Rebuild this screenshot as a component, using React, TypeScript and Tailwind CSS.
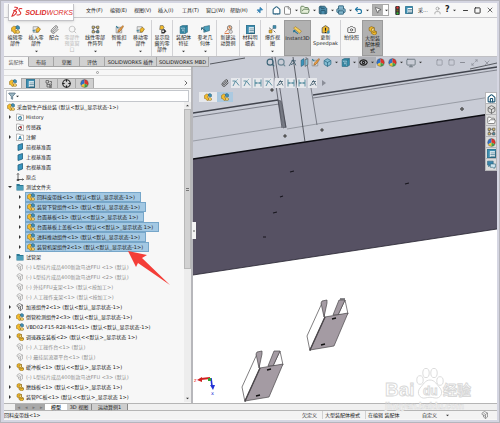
import type { ReactNode } from 'react';
import clsx from 'clsx';
import {
  Box, Camera, ChevronRight, Crosshair, Eye, File, FolderOpen, Funnel, House, Maximize2, Minus, Monitor,
  MousePointer2, Paperclip, Pin, Printer, Save, Search, Square, Undo2, User, X
} from 'lucide-react';

type GlyphName =
  | 'assembly' | 'part' | 'ghost' | 'plane' | 'folder' | 'history' | 'sensor' | 'note' | 'origin'
  | 'list' | 'tree' | 'ball' | 'pattern' | 'tools' | 'move' | 'show' | 'feature' | 'geometry'
  | 'motion' | 'explode' | 'ruler' | 'warning' | 'axes' | 'mate' | 'width' | 'chat' | 'section' | 'light';

const glyphs: Record<GlyphName, ReactNode> = {
  assembly: (
    <>
      <path d="M1 5l4-3 4 1 1 3-3 1 1 3 3 1-1 3-4 1-3-4-2 0z" fill="#f2bb2c" stroke="#8a661a" />
      <path d="M9 2l3-1 3 2v4l-3 1-3-2z" fill="#3f8fb2" stroke="#245c78" />
      <path d="M9 10l3-1 3 2v3l-3 1-3-1z" fill="#f6d268" stroke="#8a661a" />
    </>
  ),
  part: (
    <>
      <path d="M2 3l4-2 5 2v5l4 2v4l-4 2-5-3v-3l-4-2z" fill="#f2bb2c" stroke="#7c5a12" />
      <path d="M6 5l5-2v5l-4 2zM8 12l7-2" fill="#f9dd80" stroke="#7c5a12" />
    </>
  ),
  ghost: (
    <>
      <path d="M2 4l5-3 6 3v8l-4 3-4-3v-4l-3-1z" fill="#f2f2f2" stroke="currentColor" />
      <path d="M5 4l4 3 4-3M9 7v8M5 8l4 3" fill="none" stroke="currentColor" />
    </>
  ),
  plane: <path d="M4 4l9-3v11l-9 3z" fill="#3a95be" stroke="#1f607f" strokeWidth="1.6" />,
  folder: (
    <>
      <path d="M1 2h6l1 2h7v11H1z" fill="#2b7894" />
      <path d="M2 6h12v8H2z" fill="#4ca0bb" />
    </>
  ),
  history: (
    <>
      <path d="M1 2h6l1 2h7v11H1z" fill="#fff" stroke="#777" />
      <circle cx="8" cy="10" r="3.4" fill="#d7eef7" stroke="#26708f" strokeWidth="1.5" />
      <path d="M8 8v2l2 1" fill="none" stroke="#26708f" />
    </>
  ),
  sensor: (
    <>
      <path d="M1 2h6l1 2h7v11H1z" fill="#fff" stroke="#777" />
      <circle cx="8" cy="10" r="3.4" fill="none" stroke="#444" strokeWidth="1.5" />
      <path d="M8 10l3-3" stroke="#e03030" strokeWidth="2.2" />
    </>
  ),
  note: (
    <>
      <path d="M1 2h6l1 2h7v11H1z" fill="#fff" stroke="#777" />
      <path d="M5 13l3-7 3 7M6 11h4" fill="none" stroke="#1f7399" strokeWidth="1.7" />
    </>
  ),
  origin: <path d="M4 1v12h11M2 3l2-2 2 2M13 11l2 2-2 2M2 13h4v2H2z" fill="none" stroke="#333" strokeWidth="1.5" />,
  list: (
    <>
      <path d="M1 1h14v14H1z" fill="#fff" stroke="#28657f" strokeWidth="1.8" />
      <path d="M1 1h14v3H1zM1 4h4v11H1z" fill="#3f8fb2" />
      <path d="M6 7h8M6 10h8M6 13h8" stroke="#28657f" strokeWidth="1.3" />
    </>
  ),
  tree: <path d="M2 1h5v5H2zM9 3h4v4M4 6v8h5M4 9h5M9 8h4v3H9zM9 13h4v2H9z" fill="none" stroke="#555" strokeWidth="1.5" />,
  ball: (
    <>
      <path d="M8 8V1a7 7 0 0 0-6 10z" fill="#3171c7" />
      <path d="M8 8V1a7 7 0 0 1 6 10z" fill="#df352b" />
      <path d="M8 8l-6 3a7 7 0 0 0 6 4z" fill="#f3c531" />
      <path d="M8 8l6 3a7 7 0 0 1-6 4z" fill="#45a545" />
      <circle cx="8" cy="8" r="7" fill="none" stroke="#333" strokeOpacity=".6" />
    </>
  ),
  pattern: (
    <>
      <path d="M2 2h4v4H2zM10 2h4v4h-4zM2 10h4v4H2z" fill="#f6d268" stroke="#555" strokeWidth="1.3" />
      <path d="M10 10h4v4h-4zM6 4h4M4 6v4M12 6v4M6 12h4" fill="#4ca0bb" stroke="#555" strokeWidth="1.3" />
    </>
  ),
  tools: (
    <>
      <path d="M2 4h10v10H2z" fill="#d9dde0" stroke="#777" />
      <path d="M14 1L6 9l-1 4 4-2 6-8z" fill="#f2a444" stroke="#854f19" />
      <path d="M2 2l4 4" stroke="#2b7894" strokeWidth="2" />
    </>
  ),
  move: (
    <>
      <path d="M2 3h9v10H2z" fill="#e8e8e8" stroke="#777" />
      <path d="M7 8l4-4 4 3-3 5-4 1z" fill="#f2bb2c" stroke="#7c5a12" />
      <path d="M2 10h4M4 8l-2 2 2 2" fill="none" stroke="#2b7894" strokeWidth="1.4" />
    </>
  ),
  show: (
    <>
      <path d="M4 1h5l2 4-3 3H3z" fill="#f2bb2c" stroke="#555" />
      <path d="M6 9l5-2 4 4-4 4H6z" fill="#333" />
      <circle cx="9" cy="11" r="1.6" fill="#fff" />
    </>
  ),
  feature: (
    <>
      <path d="M2 3l4-2h9v12l-4 2H2z" fill="#328fae" stroke="#255d74" />
      <path d="M2 4h9v11M11 4l4-3M5 7h4v5H5z" fill="#9bd2e5" stroke="#255d74" />
    </>
  ),
  geometry: (
    <>
      <path d="M5 3l10-2v9L5 13z" fill="#4ca0bb" stroke="#255d74" />
      <path d="M1 5l8 6M1 5v4M1 5h4" fill="none" stroke="#255d74" strokeWidth="1.6" />
    </>
  ),
  motion: (
    <>
      <circle cx="10" cy="5" r="4" fill="#f3d9bd" stroke="#666" strokeWidth="1.4" />
      <path d="M2 13l6-6M1 15h8M10 2v3l2 1" fill="none" stroke="#d56a34" strokeWidth="1.7" />
      <circle cx="12" cy="12" r="3" fill="#ddd" stroke="#777" />
    </>
  ),
  explode: (
    <>
      <path d="M9 1h5v5H9z" fill="#3f8fb2" stroke="#245c78" />
      <path d="M2 9h5v5H2z" fill="#f2bb2c" stroke="#7c5a12" />
      <path d="M6 9l3-3M10 10l3 3M2 5l3 2" stroke="#555" strokeWidth="1.5" />
    </>
  ),
  ruler: (
    <>
      <path d="M1 4l3-3 11 8-3 4z" fill="#f5cf5a" stroke="#9a742c" />
      <path d="M1 8l8 6M1 8v3M1 8h3" fill="none" stroke="#2b7894" strokeWidth="1.8" />
    </>
  ),
  warning: (
    <>
      <path d="M2 5l6-4 6 4v9H2z" fill="#f2bb2c" stroke="#555" strokeWidth="1.4" />
      <path d="M8 5v5M8 12v2" stroke="#222" strokeWidth="2" />
      <path d="M11 10h4v5h-4z" fill="#3f8fb2" />
    </>
  ),
  axes: <path d="M1 4h6l7 9M7 4l-5 10M9 3l2-2" fill="none" stroke="#39788f" strokeWidth="1.6" />,
  mate: <path d="M2 14L9 3l5 10M6 5h8M11 9l-6 3" fill="none" stroke="#435d6d" strokeWidth="1.6" />,
  width: <path d="M2 1v14M14 1v14M3 8h10M5 6L3 8l2 2M11 6l2 2-2 2" fill="none" stroke="#39788f" strokeWidth="1.6" />,
  chat: (
    <>
      <path d="M1 2h10v7H6l-3 3V9H1z" fill="#3a86ae" stroke="#255d74" />
      <path d="M6 7h9v6h-2v2l-3-2H6z" fill="#cfe6f0" stroke="#255d74" />
    </>
  ),
  section: (
    <>
      <path d="M2 4l5-3v11l-5 3z" fill="#3a95be" stroke="#255d74" />
      <path d="M9 3l5-2v11l-5 3z" fill="#8cbfd3" stroke="#444" />
    </>
  ),
  light: (
    <>
      <rect x="4" y="0" width="8" height="16" rx="2" fill="#333" />
      <circle cx="8" cy="3" r="2" fill="#e33" />
      <circle cx="8" cy="8" r="2" fill="#776020" />
      <circle cx="8" cy="13" r="2" fill="#3b3" />
    </>
  )
};

function Glyph({ name, className = 'size-2' }: { name: GlyphName; className?: string }) {
  return (
    <svg viewBox="0 0 16 16" className={clsx('shrink-0', className)} aria-hidden="true">
      {glyphs[name]}
    </svg>
  );
}

function Caret() {
  return (
    <svg viewBox="0 0 4 4" className="size-[3px] shrink-0" aria-hidden="true">
      <path d="M0 1h4L2 3z" fill="#333" />
    </svg>
  );
}

const menus = ['文件(F)', '编辑(E)', '视图(V)', '插入(I)', '工具(T)', '窗口(W)', '帮助(H)'];

interface Command {
  lines: string[];
  icon: ReactNode;
  width: string;
  divider?: boolean;
  active?: boolean;
  disabled?: boolean;
  menu?: boolean;
}

const commands: Command[] = [
  { lines: ['编辑零', '部件'], icon: <Glyph name="assembly" className="size-[9px]" />, width: 'w-[22px]' },
  { lines: ['插入零', '部件'], icon: <Glyph name="move" className="size-[9px]" />, width: 'w-[20px]', menu: true },
  { lines: ['配合'], icon: <Paperclip className="size-[9px] text-[#555]" />, width: 'w-[16px]' },
  { lines: ['零部件', '预览窗', '口'], icon: <Search className="size-[9px]" />, width: 'w-[20px]', disabled: true },
  { lines: ['线性零部', '件阵列'], icon: <Glyph name="pattern" className="size-[9px]" />, width: 'w-[26px]', menu: true },
  { lines: ['智能扣', '件'], icon: <Glyph name="tools" className="size-[9px]" />, width: 'w-[22px]' },
  { lines: ['移动零', '部件'], icon: <Glyph name="move" className="size-[9px]" />, width: 'w-[21px]', menu: true },
  { lines: ['显示隐', '藏的零', '部件'], icon: <Glyph name="show" className="size-[9px]" />, width: 'w-[21px]', divider: true },
  { lines: ['装配体', '特征'], icon: <Glyph name="feature" className="size-[9px]" />, width: 'w-[22px]', divider: true, menu: true },
  { lines: ['参考几', '何体'], icon: <Glyph name="geometry" className="size-[9px]" />, width: 'w-[22px]', menu: true },
  { lines: ['新建运', '动算例'], icon: <Glyph name="motion" className="size-[9px]" />, width: 'w-[23px]', divider: true },
  { lines: ['材料明', '细表'], icon: <Glyph name="list" className="size-[9px]" />, width: 'w-[21px]', divider: true },
  { lines: ['爆炸视', '图'], icon: <Glyph name="explode" className="size-[9px]" />, width: 'w-[24px]', divider: true, menu: true },
  { lines: ['Instant3D'], icon: <Glyph name="ruler" className="size-[9px]" />, width: 'w-[27px]', active: true },
  { lines: ['更新', 'Speedpak'], icon: <Glyph name="warning" className="size-[9px]" />, width: 'w-[29px]' },
  { lines: ['拍快照'], icon: <Camera className="size-[9px] text-[#444]" />, width: 'w-[22px]', divider: true },
  { lines: ['大型装', '配体模', '式'], icon: <Glyph name="part" className="size-[9px]" />, width: 'w-[21px]', active: true }
];

const commandTabs = [
  { label: '装配体', width: 'w-[25px]' },
  { label: '布局', width: 'w-[25px]' },
  { label: '草图', width: 'w-[26px]' },
  { label: '评估', width: 'w-[25px]' },
  { label: 'SOLIDWORKS 插件', width: 'w-[52px]' },
  { label: 'SOLIDWORKS MBD', width: 'w-[52px]' }
];

interface TreeNode {
  label: string;
  icon: GlyphName;
  level?: 0 | 2;
  arrow?: 'open' | 'closed';
  selected?: boolean;
  muted?: boolean;
}

const nodes: TreeNode[] = [
  { label: '采血管生产线总装 (默认<默认_显示状态-1>)', icon: 'assembly', level: 0 },
  { label: 'History', icon: 'history', arrow: 'closed' },
  { label: '传感器', icon: 'sensor' },
  { label: '注解', icon: 'note', arrow: 'closed' },
  { label: '前视基准面', icon: 'plane' },
  { label: '上视基准面', icon: 'plane' },
  { label: '右视基准面', icon: 'plane' },
  { label: '原点', icon: 'origin' },
  { label: '测试文件夹', icon: 'folder', arrow: 'open' },
  { label: '回料皮带线<1> (默认<默认_显示状态-1>)', icon: 'assembly', level: 2, arrow: 'closed', selected: true },
  { label: '装管下管组件<1> (默认<默认_显示状态-1>)', icon: 'assembly', level: 2, arrow: 'closed', selected: true },
  { label: '台面基板<1> (默认<<默认>_显示状态 1>)', icon: 'assembly', level: 2, arrow: 'closed', selected: true },
  { label: '台面基板上盖板<1> (默认<<默认>_显示状态 1>)', icon: 'assembly', level: 2, arrow: 'closed', selected: true },
  { label: '进料推动组件<1> (默认<默认_显示状态-1>)', icon: 'assembly', level: 2, arrow: 'closed', selected: true },
  { label: '装管机架组件2<1> (默认<默认_显示状态-1>)', icon: 'assembly', level: 2, arrow: 'closed', selected: true },
  { label: '试管架', icon: 'folder', arrow: 'closed' },
  { label: '(-) L型挂片成品400新款马达FFU <1> (默认)', icon: 'ghost', muted: true },
  { label: '(-) L型挂片成品400新款马达FFU <2> (默认)', icon: 'ghost', muted: true },
  { label: '(-) 外挂FFU支架<1> (默认<按加工>)', icon: 'ghost', muted: true },
  { label: '(-) 人工操作支架<1> (默认<按加工>)', icon: 'ghost', muted: true },
  { label: '加液组件2<1> (默认<默认_显示状态-1>)', icon: 'ghost', arrow: 'closed' },
  { label: '倒管检测组件2<3> (默认<默认_显示状态-1>)', icon: 'assembly', arrow: 'closed' },
  { label: 'VBD02-F15-R28-N15<1> (默认<默认_显示状态-1>)', icon: 'assembly', arrow: 'closed' },
  { label: '调速器安装板<2> (默认<<默认>_显示状态 1>)', icon: 'part', arrow: 'closed' },
  { label: '(-) 人工操作台<1> (默认)', icon: 'ghost', muted: true },
  { label: '(-) 最挂层流罩平台<1> (默认)', icon: 'ghost', muted: true },
  { label: '缓冲板<1> (默认<<默认>_显示状态 1>)', icon: 'part', arrow: 'closed' },
  { label: '(-) L型挂片成品400新款马达FFU <3> (默认)', icon: 'ghost', muted: true },
  { label: '磨线板<1> (默认<<默认>_显示状态 1>)', icon: 'part', arrow: 'closed' },
  { label: '装管PC板<1> (默认<<默认>_显示状态 1>)', icon: 'part', arrow: 'closed' }
];

function TitleBar() {
  return (
    <header className="flex h-[15px] items-center border-b border-[#c9c9cc] bg-[#f7f7f7]">
      <div className="z-10 ml-1 mt-px flex h-[17px] w-[66px] shrink-0 items-center gap-[2px] self-start border border-t-0 border-[#c4c4c8] bg-white pl-[2px] shadow-sm">
        <svg viewBox="0 0 26 24" className="h-3 w-[13px]" aria-hidden="true">
          <path
            d="M7 2c7-1 9 1 5 4-2 2-5 3-7 3M8 10c5 0 5 3 1 7-2 3-5 4-7 4l5-11M24 5c-5-1-8 0-7 3 1 3 5 4 4 7s-5 4-9 3"
            fill="none"
            stroke="#dc2b2b"
            strokeWidth="2.2"
          />
        </svg>
        <span className="font-['Liberation_Sans'] text-[7px] italic leading-none text-[#dc2b2b]"><b>SOLID</b>WORKS</span>
      </div>
      <nav className="ml-[12px] flex shrink-0">
        {menus.map((menu) => (
          <button key={menu} type="button" className="w-6 text-left">{menu}</button>
        ))}
      </nav>
      <Pin className="ml-[2px] size-[7px] shrink-0 rotate-45 fill-[#3a86b8] text-[#3a86b8]" />
      <div className="ml-[3px] h-full w-px bg-[#cfcfd2]" />
      <div className="ml-auto flex shrink-0 items-center">
        <button type="button" aria-label="主页" className="mr-[2px]"><House className="size-[9px] fill-white text-[#2f6683]" strokeWidth={3} /></button>
        <button type="button" aria-label="新建" className="flex w-[17px] items-center gap-[3px]"><File className="size-[9px] fill-white text-[#666]" /><Caret /></button>
        <button type="button" aria-label="打开" className="flex w-[18px] items-center gap-[3px]"><FolderOpen className="size-[10px] fill-[#e5efd9] text-[#54734b]" /><Caret /></button>
        <button type="button" aria-label="保存" className="flex w-[18px] items-center gap-[3px]"><Save className="size-[10px] fill-[#4a8cab] text-[#234f65]" /><Caret /></button>
        <button type="button" aria-label="打印" className="flex w-[18px] items-center gap-[3px]"><Printer className="size-[10px] fill-[#83b6cc] text-[#2b5e77]" /><Caret /></button>
        <button type="button" aria-label="撤消" className="flex w-[18px] items-center gap-[3px]"><Undo2 className="size-[9px] text-[#2379a4]" strokeWidth={3} /><Caret /></button>
        <button type="button" aria-label="选择" className="mr-[4px] flex h-3 w-[17px] items-center border border-[#a8a8a8] bg-white">
          <span className="mr-[2px] flex h-full w-[11px] items-center justify-center bg-[#b1b1b1]"><MousePointer2 className="size-2 fill-white text-[#444]" /></span>
          <Caret />
        </button>
        <button type="button" aria-label="重建模型" className="w-[12px]"><Glyph name="light" className="size-[9px]" /></button>
        <button type="button" aria-label="选项" className="w-[13px]"><Glyph name="list" className="size-2" /></button>
        <span className="w-[15px]">采...</span>
        <button type="button" aria-label="登录" className="w-[12px]"><User className="size-[9px] text-[#999]" /></button>
        <button type="button" aria-label="帮助" className="flex w-[17px] items-center gap-[3px] text-[8px] font-bold leading-none">?<Caret /></button>
        <button type="button" aria-label="最小化" className="w-[12px]"><Minus className="size-[7px]" strokeWidth={3} /></button>
        <button type="button" aria-label="最大化" className="w-[12px]"><Square className="size-[7px]" strokeWidth={3} /></button>
        <button type="button" aria-label="关闭" className="w-[11px]"><X className="size-2" /></button>
      </div>
    </header>
  );
}

function Ribbon() {
  return (
    <div className="flex h-[39px] border-b border-[#c0c0c4] bg-[#f7f7f7] pt-[2px]">
      {commands.map(({ lines, icon, width, divider, active, disabled, menu }) => (
        <button
          key={lines.join('')}
          type="button"
          disabled={disabled}
          className={clsx(
            'flex shrink-0 flex-col items-center pt-[5px] pb-[3px]',
            width,
            divider && 'border-l border-[#d2d2d5]',
            active && 'border border-[#9b9b9b] bg-[#b1b1b1]',
            disabled && 'text-[#b9b9b9]'
          )}
        >
          {icon}
          {lines.map((line) => <span key={line} className="whitespace-nowrap leading-[6px]">{line}</span>)}
          {menu && <span className="mt-auto"><Caret /></span>}
        </button>
      ))}
    </div>
  );
}

const viewTools: { label: string; icon: ReactNode; width: string; caret?: boolean; active?: boolean }[] = [
  { label: '整屏显示', icon: <Search className="size-[9px] text-[#3d6578]" strokeWidth={3} />, width: 'w-[11px]' },
  { label: '局部放大', icon: <Search className="size-[9px] text-[#6d8795]" strokeWidth={3} />, width: 'w-[11px]' },
  { label: '上一视图', icon: <Glyph name="mate" className="size-[9px]" />, width: 'w-[12px]' },
  { label: '剖面视图', icon: <Glyph name="section" className="size-[9px]" />, width: 'w-[11px]' },
  { label: '动态注解', icon: <Glyph name="tools" className="size-[9px]" />, width: 'w-[12px]' },
  { label: '视图定向', icon: <Box className="size-[9px] fill-[#83bbd1] text-[#2b6a86]" />, width: 'w-[18px]', caret: true },
  { label: '显示样式', icon: <Glyph name="feature" className="size-[9px]" />, width: 'w-[17px]', caret: true },
  { label: '隐藏项目', icon: <Eye className="size-[9px] text-[#222]" strokeWidth={3} />, width: 'w-[18px]', caret: true, active: true },
  { label: '编辑外观', icon: <Glyph name="ball" className="size-[9px]" />, width: 'w-[12px]' },
  { label: '应用布景', icon: <Glyph name="ball" className="size-[9px]" />, width: 'w-[18px]', caret: true },
  { label: '视图设定', icon: <Monitor className="size-[10px] text-[#65717a]" />, width: 'w-[25px]', caret: true }
];

function TabRow() {
  return (
    <div className="relative flex h-[10px] justify-between">
      <div role="tablist" className="flex bg-[#d1d1d1]">
        {commandTabs.map(({ label, width }, i) => (
          <button
            key={label}
            type="button"
            role="tab"
            aria-selected={i === 0}
            className={clsx(
              'shrink-0 whitespace-nowrap border-r border-b border-[#a5a5a5] text-center',
              width,
              i === 0 ? 'border-b-[#f7f7f7] bg-[#f7f7f7] text-[#666]' : 'bg-[#d1d1d1]'
            )}
          >
            {label}
          </button>
        ))}
      </div>
      <div className="flex shrink-0 items-center pt-px">
        {viewTools.map(({ label, icon, width, caret, active }) => (
          <button
            key={label}
            type="button"
            aria-label={label}
            className={clsx('flex h-[11px] shrink-0 items-center gap-[3px]', width, active && 'bg-[#aeb0b6] pl-px')}
          >
            {icon}
            {caret && <Caret />}
          </button>
        ))}
        <div className="ml-[5px] flex items-center text-[#81848d]">
          <button type="button" aria-label="左视窗" className="w-[12px]"><Square className="size-[7px]" /></button>
          <button type="button" aria-label="右视窗" className="w-[11px]"><Square className="size-[7px]" /></button>
          <button type="button" aria-label="最小化文档" className="w-[12px]"><Minus className="size-[7px]" strokeWidth={3} /></button>
          <button type="button" aria-label="还原文档" className="w-[12px]"><Maximize2 className="size-[7px]" /></button>
          <button type="button" aria-label="关闭文档" className="w-[14px]"><X className="size-2" /></button>
        </div>
      </div>
    </div>
  );
}

function TreeRow({ node }: { node: TreeNode }) {
  const { label, icon, level = 1, arrow, selected, muted } = node;
  return (
    <li className={clsx('flex h-[10px] items-center', level === 2 ? 'pl-3' : 'pl-[2px]')}>
      {level !== 0 && (
        <span className="flex w-[9px] shrink-0 pl-[2px]">
          {arrow && (
            <svg viewBox="0 0 4 4" className="size-1" aria-hidden="true">
              <path d={arrow === 'open' ? 'M0 1h4L2 3z' : 'M1 0v4l2-2z'} fill="#333" />
            </svg>
          )}
        </span>
      )}
      <button
        type="button"
        className={clsx(
          'flex h-full items-center gap-[2px] whitespace-nowrap pl-px',
          selected && 'border border-[#76a6c9] bg-[#a3c8e3] pr-[5px]',
          muted && 'text-[#8e8e8e]'
        )}
      >
        <Glyph name={icon} />
        <span>{label}</span>
      </button>
    </li>
  );
}

const panelTabs: { label: string; icon: ReactNode }[] = [
  { label: '设计树', icon: <Glyph name="assembly" /> },
  { label: '属性', icon: <Glyph name="list" className="size-[9px]" /> },
  { label: '配置', icon: <Glyph name="tree" /> },
  { label: '尺寸', icon: <Crosshair className="size-[9px] text-[#222]" strokeWidth={3} /> },
  { label: '外观', icon: <Glyph name="ball" className="size-[9px]" /> }
];

function FeaturePanel() {
  return (
    <aside className="relative w-[189px] shrink-0 border-r-2 border-[#b7b7bb] bg-[#f7f7f7] pt-[2px] pb-px">
      <div className="flex h-[7px] items-center justify-center border-y border-[#dcdcdc]">
        <span className="size-[3px] rounded-full border border-[#999]" />
      </div>
      <div className="mt-[2px] flex h-[11px] items-center border-b border-[#bcbcbc]">
        {panelTabs.map(({ label, icon }, i) => (
          <button
            key={label}
            type="button"
            aria-label={label}
            className={clsx(
              'flex h-full w-[18px] items-center justify-center border-r border-[#a9a9a9]',
              i > 0 && 'border-t bg-[#cfcfcf]'
            )}
          >
            {icon}
          </button>
        ))}
        <ChevronRight className="mr-px ml-auto size-2" />
      </div>
      <label className="mx-[2px] mt-px flex h-[12px] items-center border border-[#c4c7cc] bg-white pl-px">
        <Funnel className="size-2 fill-[#9ab4c2] text-[#456273]" />
        <Caret />
        <input aria-label="筛选" className="min-w-0 flex-1 bg-transparent outline-none" />
      </label>
      <div className="flex">
        <ul className="min-w-0 flex-1">
          {nodes.map((node) => <TreeRow key={node.label} node={node} />)}
        </ul>
        <div className="flex w-[7px] flex-col items-center bg-[#ededed]">
          <svg viewBox="0 0 4 4" className="mt-[2px] mb-[2px] size-[3px]" aria-hidden="true"><path d="M0 3h4L2 1z" fill="#333" /></svg>
          <div className="flex h-[160px] w-full items-center justify-center border border-[#b8b8b8] bg-[#d2d2d2]">
            <span className="h-[3px] w-[3px] border-y border-[#777]" />
          </div>
          <span className="mt-auto mb-[2px]"><Caret /></span>
        </div>
      </div>
      <svg viewBox="0 0 50 40" className="absolute top-[182px] left-[122px] z-10 h-10 w-[50px]" aria-hidden="true">
        <path d="M2 2l19 4-5 3 28 27-32-22-2 4z" fill="#f43e38" />
      </svg>
      <button type="button" aria-label="折叠" className="absolute top-[155px] -right-[5px] flex h-[17px] w-1 items-center justify-center bg-[#f4f4f4]">
        <span className="size-[2px] bg-[#aaa]" />
      </button>
    </aside>
  );
}

function Bracket({ x, y }: { x: number; y: number }) {
  return (
    <g transform={`translate(${x} ${y})`} stroke="#4b474b" strokeWidth=".7" strokeLinejoin="round">
      <path d="M15 4L0 37l3 15 15-33z" fill="#fff" />
      <path d="M14 4l1-2 5-1v3l-3 14z" fill="#a49ba3" />
      <path d="M31 16L38 1l3 14z" fill="#fff" />
      <path d="M26 16L32 1h6l-7 15z" fill="#a49ba3" />
      <path d="M18 18l23-4-14 33-24 4z" fill="#a49ba3" />
      <path d="M18 18L3 51" strokeWidth="1.4" />
      <path d="M25 20l4-1M14 46l4-1" stroke="#111" strokeWidth="1.3" />
    </g>
  );
}

function ModelScene() {
  return (
    <svg viewBox="193 57 304 347" preserveAspectRatio="xMinYMin slice" className="absolute inset-y-0 right-0 left-[189px] h-full w-[calc(100%-189px)]" aria-hidden="true">
      <rect x="193" y="57" width="304" height="347" fill="#fff" />
      <path d="M193 57h304v56L193 159z" fill="#c9ccd6" />
      <path d="M193 159L497 113v116L193 275z" fill="#565163" />
      <path d="M193 159L497 113" stroke="#0c0c12" strokeWidth="1.3" />
      <path d="M193 275L497 229" stroke="#25222e" strokeWidth=".8" />
      <g fill="none" stroke="#5c5f69" strokeWidth=".7">
        <path d="M210 64l35-6M470 69l27-6" stroke="#24262c" />
        <path d="M193 113l85-13M313 95l184-28" stroke="#41444d" strokeWidth="1.3" />
        <path d="M193 117l86-13M313 98l184-28" />
        <path d="M193 141l89-14M287 129l30-5 180-28" stroke="#83868f" />
        <path d="M293 57l12 85" stroke="#2d2f36" />
        <path d="M306 57l11 68" />
        <path d="M278 100l5 28 3-1-5-26z" fill="#777a84" />
        <path d="M272 57l10 71M275 57l11 71" stroke="#3c3e47" />
      </g>
      <g fill="#999" stroke="#222" strokeWidth=".8">
        <circle cx="285" cy="136" r="1.2" />
        <circle cx="322" cy="130" r="1.2" />
        <circle cx="272" cy="90" r="1.2" />
        <circle cx="462" cy="109" r="1.3" />
      </g>
      <path d="M290 172l4-1M405 184l4-1M280 197l3-1M273 213l4-1M263 237l3 0M340 299l5 0" stroke="#17151d" strokeWidth="1.2" />
      <Bracket x={242} y={350} />
      <Bracket x={307} y={299} />
      <path d="M210 378l-9 1" stroke="#d11f1f" strokeWidth="1.8" />
      <path d="M197 380l5-3v5z" fill="#d11f1f" />
      <path d="M211 378l1 8" stroke="#2333d6" strokeWidth="1.6" />
      <path d="M210 385h5l-2 5z" fill="#2333d6" />
      <path d="M208 378h3v3h-3z" fill="#2fa32f" />
      <text x="194" y="382" fontSize="5" fill="#e33">z</text>
      <text x="211" y="395" fontSize="5" fill="#2333d6">x</text>
    </svg>
  );
}

const mateTools: GlyphName[] = ['axes', 'axes', 'width', 'axes', 'mate', 'width', 'width', 'mate'];

const taskPane: { label: string; icon: ReactNode }[] = [
  { label: '资源', icon: <House className="size-[9px] text-[#1d5674]" strokeWidth={3} /> },
  { label: '设计库', icon: <Box className="size-[9px] text-[#555]" /> },
  { label: '文件探索器', icon: <FolderOpen className="size-[9px] fill-white text-[#666]" /> },
  { label: '视图调色板', icon: <Glyph name="pattern" className="size-[9px]" /> },
  { label: '外观布景', icon: <Glyph name="ball" className="size-[9px]" /> },
  { label: '自定义属性', icon: <Glyph name="list" className="size-[9px]" /> },
  { label: '论坛', icon: <Glyph name="chat" className="size-[9px]" /> }
];

function Viewport() {
  return (
    <main className="relative flex min-w-0 flex-1 items-start justify-between">
      <div className="pt-[11px] pl-[6px]">
        <div className="flex items-center gap-[2px] pl-[22px]">
          <Paperclip className="size-2 text-[#555]" strokeWidth={3} />
          {mateTools.map((name, i) => (
            <button key={i} type="button" aria-label={`配合 ${i + 1}`} className="flex h-[10px] w-[9px] items-center justify-center bg-[#e6e8ec]">
              <Glyph name={name} />
            </button>
          ))}
          <svg viewBox="0 0 4 6" className="ml-[3px] h-[6px] w-1" aria-hidden="true"><path d="M0 0v6l4-3z" fill="#8b8e98" /></svg>
        </div>
        <div className="mt-[4px] flex h-[10px] w-[34px]">
          <button type="button" aria-label="总装" className="flex flex-1 items-center justify-center bg-[#e6e8ec] pl-px"><Glyph name="assembly" /></button>
          <button type="button" aria-label="组件" className="flex flex-1 items-center justify-center bg-[#abc9e0]"><Glyph name="assembly" /></button>
        </div>
      </div>
      <div className="mt-[25px] flex w-3 flex-col border border-[#b5b5b8]">
        {taskPane.map(({ label, icon }, i) => (
          <button
            key={label}
            type="button"
            aria-label={label}
            className={clsx('flex h-[11px] items-center justify-center border-b border-[#b5b5b8] last:border-b-0', i === 0 ? 'bg-white' : 'bg-[#dcdcdc]')}
          >
            {icon}
          </button>
        ))}
      </div>
    </main>
  );
}

function Footer() {
  return (
    <footer>
      <div className="flex h-[8px] items-stretch border-y border-[#b5b5b5] bg-[#f0f0f0] leading-[6px]">
        <div className="ml-[11px] flex w-[30px] justify-around bg-[#a9a9a9] text-[#777]">
          <span>◂</span><span>◂</span><span>▸</span><span>▸</span>
        </div>
        <button type="button" className="w-[22px] bg-white font-medium">模型</button>
        <button type="button" className="w-[25px] border-r border-[#888] bg-[#cecece]">3D 视图</button>
        <button type="button" className="w-[36px] border-r border-[#888] bg-[#cecece]">运动算例1</button>
      </div>
      <div className="flex h-2 items-center justify-between bg-[#f3f3f3] pr-[2px]">
        <span>回料皮带线&lt;1&gt;</span>
        <div className="flex items-center">
          <span className="w-[20px]">欠定义</span>
          <span className="w-[43px] border-l border-[#d0d0d0] pl-[2px]">大型装配体模式</span>
          <span className="w-[39px] border-l border-[#d0d0d0] pl-[2px]">在编辑 装配体</span>
          <span className="w-[18px] border-l border-[#d0d0d0]" />
          <span className="w-[24px]">自定义</span>
          <span className="w-[35px]"><Caret /></span>
          <Glyph name="ghost" className="size-2 text-[#555]" />
          <span className="w-[6px]" />
        </div>
      </div>
    </footer>
  );
}

function Watermark() {
  return (
    <svg viewBox="0 0 92 46" className="pointer-events-none absolute right-[21px] bottom-[8px] h-[46px] w-[92px]" aria-hidden="true">
      <g fill="#fff" stroke="#d8d8d8" strokeWidth=".9">
        <ellipse cx="36" cy="14" rx="3.2" ry="4.3" />
        <ellipse cx="42" cy="7" rx="3.2" ry="4.6" />
        <ellipse cx="50" cy="7" rx="3.2" ry="4.6" />
        <ellipse cx="56" cy="15" rx="3.2" ry="4.3" />
        <path d="M46 14c5 0 7 5 10 8 4 5 0 11-5 10-4-1-6-1-10 0-5 1-9-5-5-10 3-3 5-8 10-8z" />
        <text x="1" y="30" fontSize="19" fontWeight="700" fontFamily="Liberation Sans">Bai</text>
        <text x="39" y="29" fontSize="12" fontWeight="700" fontFamily="Liberation Sans">du</text>
        <text x="59" y="29" fontSize="14" fontWeight="700" fontFamily="Noto Sans CJK SC">经验</text>
      </g>
      <text x="1" y="43" fontSize="9" fontWeight="700" fontFamily="Liberation Sans" fill="#f7f7f7" stroke="#dadada" strokeWidth=".5">jingyan.baidu.com</text>
    </svg>
  );
}

export default function App() {
  return (
    <div className="relative min-h-screen overflow-hidden border-[3px] border-l-4 border-[#d5d6e2] bg-[#f7f7f7] font-['DejaVu_Sans','Noto_Sans_CJK_SC',sans-serif] text-[5px] leading-[8px] text-[#222] outline outline-1 -outline-offset-1 outline-[#b5b5bd]">
      <TitleBar />
      <Ribbon />
      <div className="relative">
        <ModelScene />
        <TabRow />
        <div className="relative flex">
          <FeaturePanel />
          <Viewport />
        </div>
      </div>
      <Footer />
      <Watermark />
    </div>
  );
}
